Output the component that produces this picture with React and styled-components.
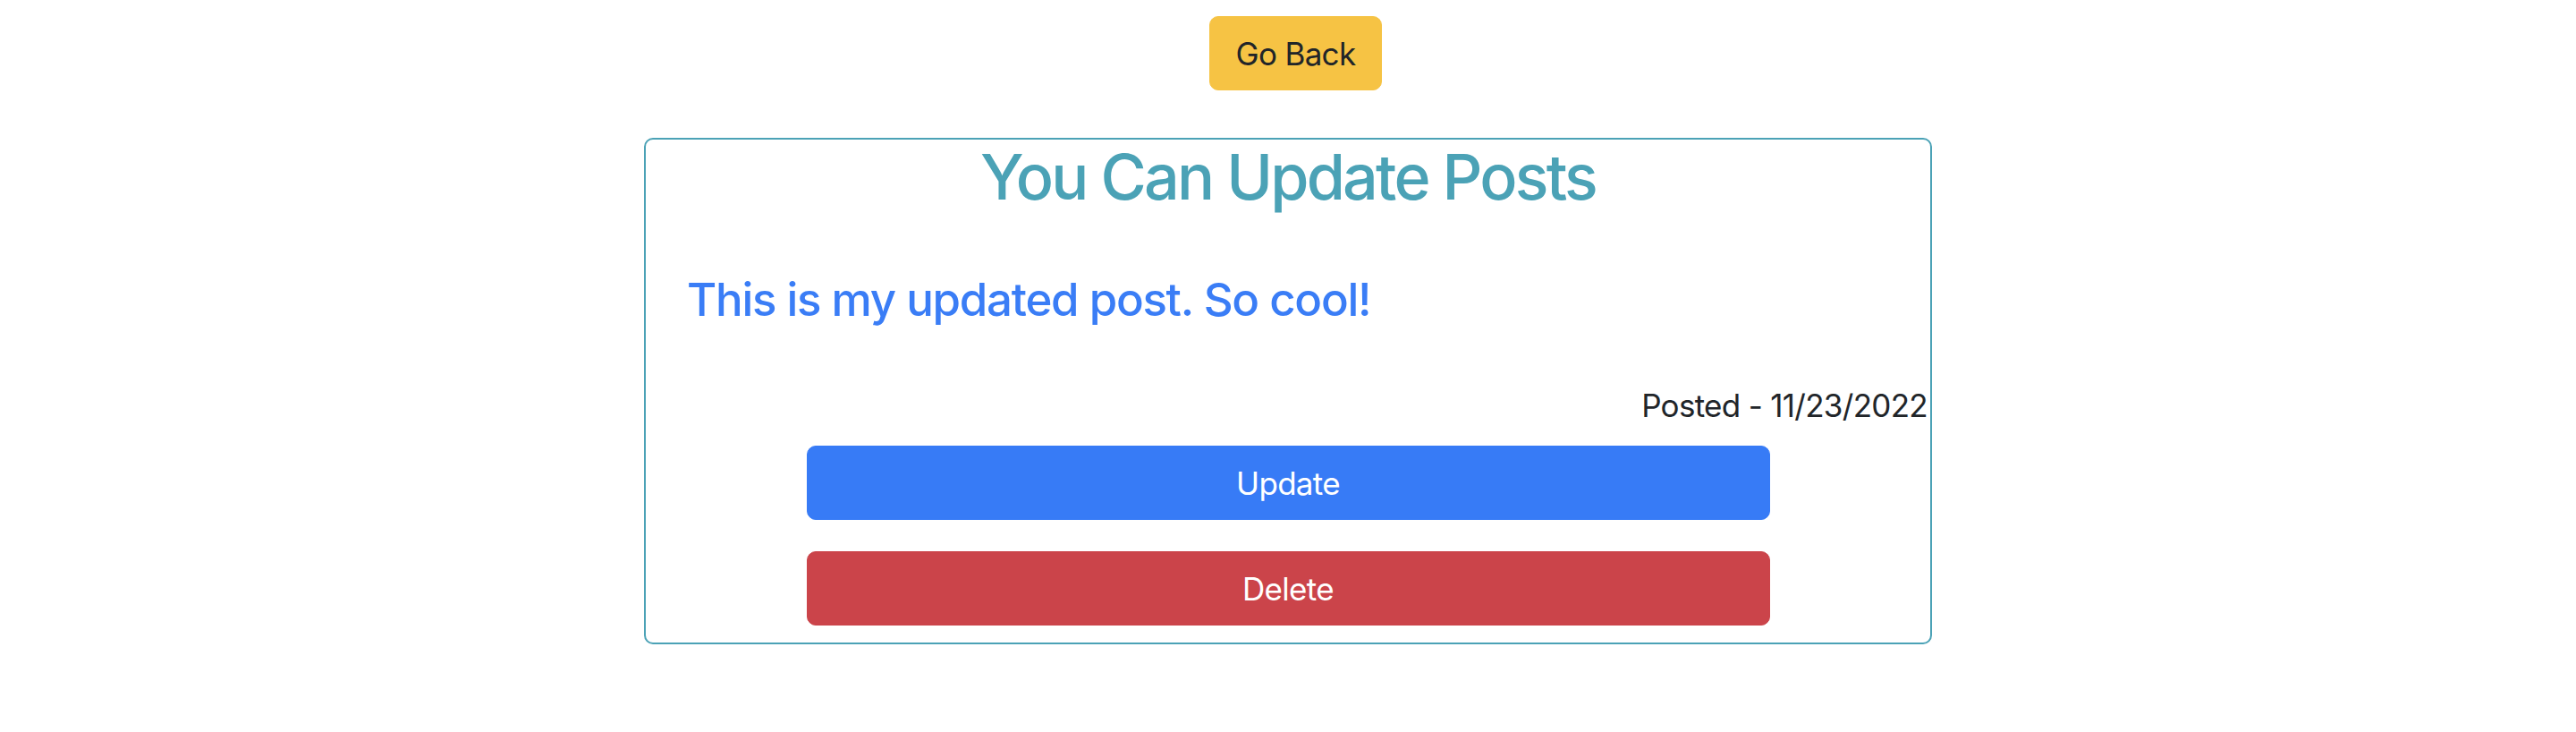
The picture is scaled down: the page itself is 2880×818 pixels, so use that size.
import styled, { createGlobalStyle } from 'styled-components'

const GlobalStyle = createGlobalStyle`
    body {
        margin: 0;
        background: #ffffff;
        font-family: Inter, "Noto Sans", sans-serif;
        color: #212529;
    }
`

const colors = {
    warning: { bg: '#f6c344', fg: '#212529' },
    primary: { bg: '#377bf6', fg: '#ffffff' },
    danger: { bg: '#cb444a', fg: '#ffffff' },
}

function App() {
    const post = {
        text: 'This is my updated post. So cool!',
        date: '11/23/2022',
    }

    return (
        <Page>
            <GlobalStyle />
            <TopBar>
                <BackButton $variant="warning">Go Back</BackButton>
            </TopBar>

            <Card>
                <Title>You Can Update Posts</Title>
                <PostText>{post.text}</PostText>
                <Posted>Posted - {post.date}</Posted>
                <Actions>
                    <Button $variant="primary">Update</Button>
                    <Button $variant="danger">Delete</Button>
                </Actions>
            </Card>
        </Page>
    )
}

export default App

const Page = styled.div`
    padding-top: 18px;
`

const TopBar = styled.div`
    display: flex;
    justify-content: center;
`

const Button = styled.button`
    font-family: inherit;
    font-size: 35px;
    line-height: 54px;
    letter-spacing: -0.02em;
    padding: 13.5px 29px;
    border: 1px solid ${p => colors[p.$variant].bg};
    border-radius: 10px;
    background-color: ${p => colors[p.$variant].bg};
    color: ${p => colors[p.$variant].fg};
    cursor: pointer;
`

const BackButton = styled(Button)`
    margin-left: 17px;
`

const Card = styled.div`
    width: 1440px;
    box-sizing: border-box;
    margin: 53px auto 0;
    border: 2px solid #4ba2b6;
    border-radius: 10px;
    padding-bottom: 19px;
`

const Title = styled.h1`
    margin: 0;
    text-align: center;
    font-size: 70px;
    line-height: 84px;
    font-weight: 500;
    letter-spacing: -0.04em;
    color: #4ba2b6;
`

const PostText = styled.h3`
    margin: 64px 0 0;
    padding-left: 46px;
    font-size: 51px;
    line-height: 61px;
    font-weight: 500;
    letter-spacing: -0.025em;
    color: #3a7df6;
`

const Posted = styled.p`
    margin: 62px 0 0;
    padding-right: 3px;
    text-align: right;
    font-size: 35px;
    line-height: 52px;
    letter-spacing: -0.02em;
`

const Actions = styled.div`
    margin-top: 19px;
    display: flex;
    flex-direction: column;
    align-items: center;
    gap: 35px;

    > button {
        width: 75%;
    }
`
